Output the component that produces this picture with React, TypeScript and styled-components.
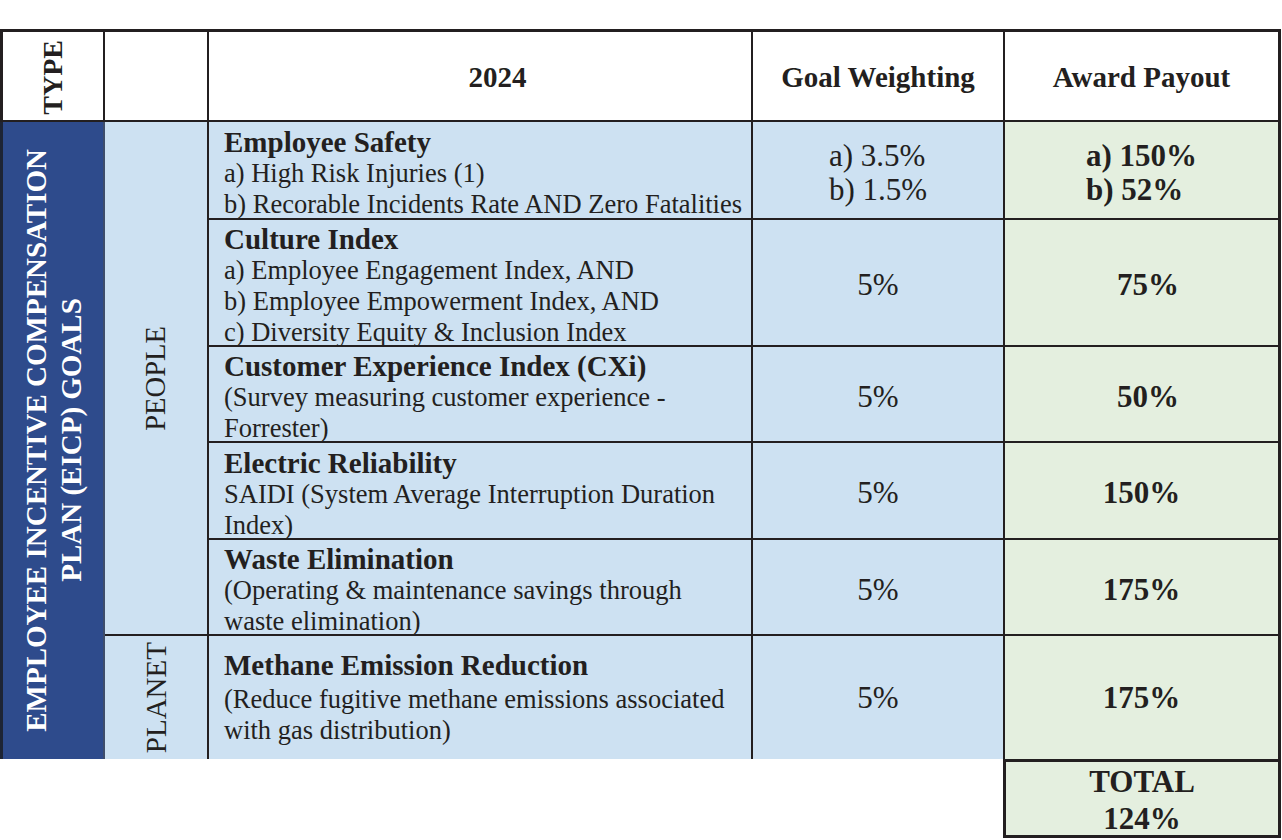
import React from 'react';
import styled, { createGlobalStyle } from 'styled-components';

const INK = '#231f20';
const NAVY = '#2e4b8c';
const BLUE = '#cde1f2';
const GREEN = '#e4efdf';

const Global = createGlobalStyle`
  html, body { margin: 0; padding: 0; background: #ffffff; }
  body {
    font-family: "Liberation Serif", "Times New Roman", Times, serif;
    color: ${INK};
  }
`;

const Page = styled.div`
  padding-top: 29px;
  width: 1282px;
`;

const Table = styled.div`
  display: grid;
  grid-template-columns: 105px 104px 544px 252px 276px;
  grid-template-rows: 93px 98px 127px 96px 97px 96px 123px;
  width: 1281px;
`;

const HeaderCell = styled.div<{ $first?: boolean; $last?: boolean; $padLeft?: number }>`
  box-sizing: border-box;
  grid-row: 1;
  background: #ffffff;
  border-top: 3px solid ${INK};
  border-bottom: 2px solid ${INK};
  border-right: ${(p) => (p.$last ? 3 : 2)}px solid ${INK};
  border-left: ${(p) => (p.$first ? '3px solid ' + INK : '0')};
  display: flex;
  align-items: center;
  justify-content: center;
  padding-left: ${(p) => p.$padLeft ?? 0}px;
  padding-top: 2px;
  font-weight: 700;
  font-size: 29px;
  line-height: 34px;
  white-space: nowrap;
`;

const Vertical = styled.div<{ $size: number; $bold?: boolean; $color?: string; $lh?: number }>`
  writing-mode: vertical-rl;
  transform: rotate(180deg);
  text-align: center;
  white-space: nowrap;
  font-size: ${(p) => p.$size}px;
  font-weight: ${(p) => (p.$bold ? 700 : 400)};
  color: ${(p) => p.$color ?? INK};
  line-height: ${(p) => p.$lh ?? 34}px;
`;

const NavyCell = styled.div`
  box-sizing: border-box;
  grid-column: 1;
  grid-row: 2 / 8;
  background: ${NAVY};
  border-left: 3px solid #1d2434;
  border-right: 2px solid #3e4d6b;
  display: flex;
  align-items: center;
  justify-content: center;
  padding-left: 2px;
`;

const GroupCell = styled.div<{ $rows: string; $bottom?: boolean }>`
  box-sizing: border-box;
  grid-column: 2;
  grid-row: ${(p) => p.$rows};
  background: ${BLUE};
  border-right: 2px solid ${INK};
  border-bottom: ${(p) => (p.$bottom ? '2px solid ' + INK : '0')};
  display: flex;
  align-items: center;
  justify-content: center;
`;

const GoalCell = styled.div<{ $row: number; $last?: boolean }>`
  box-sizing: border-box;
  grid-column: 3;
  grid-row: ${(p) => p.$row};
  background: ${BLUE};
  border-right: 2px solid ${INK};
  border-bottom: ${(p) => (p.$last ? '0' : '2px solid ' + INK)};
  padding: ${(p) => (p.$last ? 0 : 6)}px 3px 0 15px;
  display: flex;
  flex-direction: column;
  justify-content: center;
  overflow: hidden;
`;

const GoalTitle = styled.div<{ $spaced?: boolean }>`
  font-weight: 700;
  font-size: 29px;
  line-height: 32px;
  margin-bottom: ${(p) => (p.$spaced ? 3 : 0)}px;
  white-space: nowrap;
`;

const GoalLine = styled.div`
  font-size: 26.5px;
  line-height: 31px;
  white-space: nowrap;
`;

const WeightCell = styled.div<{ $row: number; $last?: boolean }>`
  box-sizing: border-box;
  grid-column: 4;
  grid-row: ${(p) => p.$row};
  background: ${BLUE};
  border-right: 2px solid ${INK};
  border-bottom: ${(p) => (p.$last ? '0' : '2px solid ' + INK)};
  padding-top: ${(p) => (p.$last ? 0 : 5)}px;
  display: flex;
  align-items: center;
  justify-content: center;
  font-size: 31px;
  line-height: 34px;
`;

const PayoutCell = styled.div<{ $row: number; $last?: boolean; $nudge?: number }>`
  box-sizing: border-box;
  grid-column: 5;
  grid-row: ${(p) => p.$row};
  background: ${GREEN};
  border-right: 3px solid ${INK};
  border-bottom: ${(p) => (p.$last ? '0' : '2px solid ' + INK)};
  padding-top: ${(p) => (p.$last ? 0 : 5)}px;
  padding-left: ${(p) => p.$nudge ?? 0}px;
  display: flex;
  align-items: center;
  justify-content: center;
  font-weight: 700;
  font-size: 31px;
  line-height: 34px;
`;

const ValueStack = styled.div`
  display: inline-block;
  text-align: left;
  white-space: nowrap;
`;

const Footer = styled.div`
  display: flex;
  justify-content: flex-end;
  width: 1281px;
`;

const TotalBox = styled.div`
  box-sizing: border-box;
  width: 278px;
  height: 79px;
  border: 3px solid ${INK};
  background: ${GREEN};
  display: flex;
  flex-direction: column;
  align-items: center;
  justify-content: center;
  padding-top: 2px;
  font-weight: 700;
  font-size: 31px;
  line-height: 37px;
`;

type Goal = {
  title: string;
  lines: string[];
  weight: string[];
  payout: string[];
  nudge?: number;
};

const goals: Goal[] = [
  {
    title: 'Employee Safety',
    lines: ['a) High Risk Injuries (1)', 'b) Recorable Incidents Rate AND Zero Fatalities'],
    weight: ['a) 3.5%', 'b) 1.5%'],
    payout: ['a) 150%', 'b) 52%'],
  },
  {
    title: 'Culture Index',
    lines: [
      'a) Employee Engagement Index, AND',
      'b) Employee Empowerment Index, AND',
      'c) Diversity Equity & Inclusion Index',
    ],
    weight: ['5%'],
    payout: ['75%'],
    nudge: 13,
  },
  {
    title: 'Customer Experience Index (CXi)',
    lines: ['(Survey measuring customer experience -', 'Forrester)'],
    weight: ['5%'],
    payout: ['50%'],
    nudge: 13,
  },
  {
    title: 'Electric Reliability',
    lines: ['SAIDI (System Average Interruption Duration', 'Index)'],
    weight: ['5%'],
    payout: ['150%'],
  },
  {
    title: 'Waste Elimination',
    lines: ['(Operating & maintenance savings through', 'waste elimination)'],
    weight: ['5%'],
    payout: ['175%'],
  },
  {
    title: 'Methane Emission Reduction',
    lines: ['(Reduce fugitive methane emissions associated', 'with gas distribution)'],
    weight: ['5%'],
    payout: ['175%'],
  },
];

export default function App() {
  return (
    <Page>
      <Global />
      <Table>
        <HeaderCell $first>
          <Vertical $size={28} $bold>
            TYPE
          </Vertical>
        </HeaderCell>
        <HeaderCell />
        <HeaderCell $padLeft={35}>2024</HeaderCell>
        <HeaderCell>Goal Weighting</HeaderCell>
        <HeaderCell $last>Award Payout</HeaderCell>

        <NavyCell>
          <Vertical $size={29} $bold $color="#ffffff" $lh={35}>
            EMPLOYEE INCENTIVE COMPENSATION
            <br />
            PLAN (EICP) GOALS
          </Vertical>
        </NavyCell>

        <GroupCell $rows="2 / 7" $bottom>
          <Vertical $size={28.6}>PEOPLE</Vertical>
        </GroupCell>
        <GroupCell $rows="7">
          <Vertical $size={29}>PLANET</Vertical>
        </GroupCell>

        {goals.map((g, i) => {
          const row = i + 2;
          const last = i === goals.length - 1;
          return (
            <React.Fragment key={g.title}>
              <GoalCell $row={row} $last={last}>
                <GoalTitle $spaced={last}>{g.title}</GoalTitle>
                {g.lines.map((l) => (
                  <GoalLine key={l}>{l}</GoalLine>
                ))}
              </GoalCell>
              <WeightCell $row={row} $last={last}>
                <ValueStack>
                  {g.weight.map((w) => (
                    <div key={w}>{w}</div>
                  ))}
                </ValueStack>
              </WeightCell>
              <PayoutCell $row={row} $last={last} $nudge={g.nudge}>
                <ValueStack>
                  {g.payout.map((p) => (
                    <div key={p}>{p}</div>
                  ))}
                </ValueStack>
              </PayoutCell>
            </React.Fragment>
          );
        })}
      </Table>
      <Footer>
        <TotalBox>
          <div>TOTAL</div>
          <div>124%</div>
        </TotalBox>
      </Footer>
    </Page>
  );
}
